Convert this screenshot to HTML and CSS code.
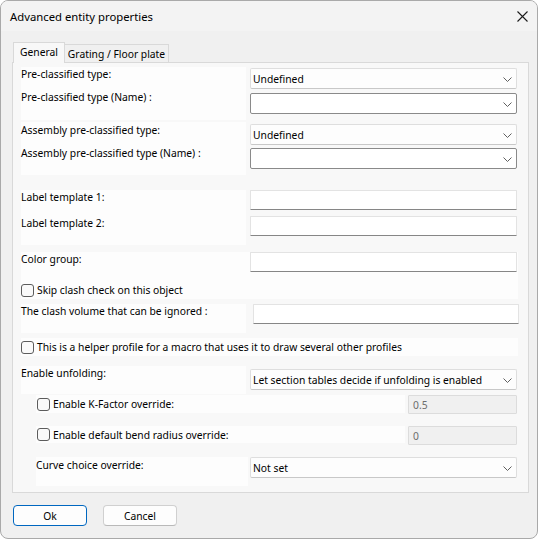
FILE: index.html
```html
<!DOCTYPE html>
<html lang="en">
<head>
<meta charset="utf-8">
<title>Advanced entity properties</title>
<link rel="stylesheet" href="styles.css">
</head>
<body>
<div class="window">
  <div class="titlebar">
    <span class="title">Advanced entity properties</span>
    <svg class="close" width="11" height="11" viewBox="0 0 11 11"><path d="M0.5 0.5 L10.5 10.5 M10.5 0.5 L0.5 10.5" stroke="#1b1b1b" stroke-width="1.1" fill="none"/></svg>
  </div>
  <div class="client">
    <div class="tabs">
      <div class="tab active">General</div>
      <div class="tab">Grating / Floor plate</div>
    </div>
    <div class="panel">

      <div class="row grp-class">
        <div class="lblbox tall">
          <div class="lbl first">Pre-classified type:</div>
          <div class="lbl">Pre-classified type (Name) :</div>
        </div>
        <div class="fields combos">
          <div class="combo">Undefined<svg class="chev" width="9" height="5" viewBox="0 0 9 5"><polyline points="0.5,0.5 4.5,4.5 8.5,0.5" fill="none" stroke="#5f5f5f" stroke-width="1"/></svg></div>
          <div class="combo edit"><svg class="chev" width="9" height="5" viewBox="0 0 9 5"><polyline points="0.5,0.5 4.5,4.5 8.5,0.5" fill="none" stroke="#5f5f5f" stroke-width="1"/></svg></div>
        </div>
      </div>

      <div class="row grp-assembly">
        <div class="lblbox tall">
          <div class="lbl first">Assembly pre-classified type:</div>
          <div class="lbl">Assembly pre-classified type (Name) :</div>
        </div>
        <div class="fields combos">
          <div class="combo">Undefined<svg class="chev" width="9" height="5" viewBox="0 0 9 5"><polyline points="0.5,0.5 4.5,4.5 8.5,0.5" fill="none" stroke="#5f5f5f" stroke-width="1"/></svg></div>
          <div class="combo edit"><svg class="chev" width="9" height="5" viewBox="0 0 9 5"><polyline points="0.5,0.5 4.5,4.5 8.5,0.5" fill="none" stroke="#5f5f5f" stroke-width="1"/></svg></div>
        </div>
      </div>

      <div class="row grp-labels">
        <div class="lblbox labels">
          <div class="lbl wide">Label template 1:</div>
          <div class="lbl">Label template 2:</div>
        </div>
        <div class="fields texts">
          <div class="input"></div>
          <div class="input"></div>
        </div>
      </div>

      <div class="row grp-color box fullw">
        <div class="lblbox plain">
          <div class="lbl">Color group:</div>
        </div>
        <div class="fields">
          <div class="input"></div>
        </div>
      </div>

      <div class="row check box fullw">
        <span class="cb"></span><span>Skip clash check on this object</span>
      </div>

      <div class="row grp-clash">
        <div class="lblbox short">
          <div class="lbl">The clash volume that can be ignored :</div>
        </div>
        <div class="input clash"></div>
      </div>

      <div class="row check box fullw grp-helper">
        <span class="cb"></span><span>This is a helper profile for a macro that uses it to draw several other profiles</span>
      </div>

      <div class="row grp-unfold">
        <div class="lblbox unfold">
          <div class="lbl">Enable unfolding:</div>
        </div>
        <div class="fields pad3">
          <div class="combo">Let section tables decide if unfolding is enabled<svg class="chev" width="9" height="5" viewBox="0 0 9 5"><polyline points="0.5,0.5 4.5,4.5 8.5,0.5" fill="none" stroke="#5f5f5f" stroke-width="1"/></svg></div>
        </div>
      </div>

      <div class="row grp-kfactor">
        <div class="check box sub">
          <span class="cb"></span><span>Enable K-Factor override:</span>
        </div>
        <div class="input disabled">0.5</div>
      </div>

      <div class="row grp-bend">
        <div class="check box sub">
          <span class="cb"></span><span>Enable default bend radius override:</span>
        </div>
        <div class="input disabled">0</div>
      </div>

      <div class="row grp-curve">
        <div class="lblbox curve">
          <div class="lbl">Curve choice override:</div>
        </div>
        <div class="fields near">
          <div class="combo">Not set<svg class="chev" width="9" height="5" viewBox="0 0 9 5"><polyline points="0.5,0.5 4.5,4.5 8.5,0.5" fill="none" stroke="#5f5f5f" stroke-width="1"/></svg></div>
        </div>
      </div>

    </div>
    <div class="buttons">
      <div class="btn default">Ok</div>
      <div class="btn">Cancel</div>
    </div>
  </div>
</div>
</body>
</html>
```

FILE: styles.css
```css
* { box-sizing: border-box; }

html { background: #ffffff; }

body {
  margin: 0;
  font-family: "Noto Sans", "Segoe UI", sans-serif;
  font-size: 10.3px;
  color: #000;
}

.window {
  width: 538px;
  height: 539px;
  border: 1px solid #a9a9a9;
  border-radius: 8px;
  background: #f0f0f0;
  overflow: hidden;
  display: flex;
  flex-direction: column;
}

/* title bar */
.titlebar {
  height: 30px;
  flex: none;
  background: #f3f3f3;
  display: flex;
  align-items: center;
  padding: 0 9px 0 9px;
}
.title { flex: 1; font-size: 11.3px; }
.close { flex: none; }

.client {
  padding: 11px 0 0 11px;
}

/* tabs */
.tabs {
  height: 20px;
  display: flex;
  align-items: flex-end;
  padding-left: 1px;
}
.tab {
  height: 18px;
  border: 1px solid #d9d9d9;
  border-bottom: none;
  background: #f0f0f0;
  display: flex;
  align-items: center;
  justify-content: center;
  line-height: 13px;
  white-space: nowrap;
}
.tab.active {
  width: 52px;
  height: 21px;
  margin-bottom: -1px;
  background: #f8f8f8;
  position: relative;
  z-index: 1;
  padding-bottom: 2px;
}
.tab + .tab {
  width: 105px;
  margin-left: -1px;
  padding-top: 1px;
}

/* page panel */
.panel {
  width: 517px;
  height: 431px;
  border: 1px solid #d9d9d9;
  background: #f8f8f8;
  padding: 4px 0 0 8px;
}

.row { display: flex; align-items: flex-start; }
.box { background: #fdfdfd; }
.fullw { width: 497px; }

.lblbox {
  width: 225px;
  background: #fdfdfd;
  flex: none;
}
.lbl { line-height: 13px; white-space: nowrap; padding-top: 1px; }
.lblbox.tall { height: 53px; }
.lblbox.tall .lbl.first { height: 23px; }
.lblbox.labels { height: 55px; }
.lblbox.labels .lbl.wide { height: 26px; }
.lblbox.plain { height: 29px; background: transparent; }
.lblbox.short { height: 29px; }
.lblbox.unfold { height: 28px; }
.lblbox.curve { width: 212px; height: 29px; margin-left: 15px; padding-top: 1px; }

.fields {
  width: 267px;
  margin-left: 4px;
  display: flex;
  flex-direction: column;
  flex: none;
}
.fields.combos { padding-top: 1px; gap: 4px; }
.fields.texts { gap: 6px; }
.fields.pad3 { padding-top: 3px; }
.fields.near { margin-left: 2px; }

/* group spacing */
.grp-assembly { margin-top: 2px; }
.grp-assembly .lblbox .lbl:first-child { margin-top: 1px; height: 23px; }
.grp-assembly .combos { padding-top: 2px; gap: 3px; }
.grp-labels { margin-top: 15px; }
.grp-color { margin-top: 7px; height: 29px; }
.grp-clash { margin-top: 5px; }
.grp-helper { margin-top: 5px; }
.grp-unfold { margin-top: 10px; }
.grp-kfactor { margin-top: 1px; }
.grp-bend { margin-top: 12px; }
.grp-curve { margin-top: 12px; }

/* combo boxes */
.combo {
  height: 21px;
  border: 1px solid #dedede;
  border-bottom-color: #c8c8c8;
  border-radius: 2px;
  background: #fdfdfd;
  display: flex;
  align-items: center;
  padding: 0 0 0 2px;
  position: relative;
  white-space: nowrap;
}
.combo.edit {
  background: #ffffff;
  border-color: #8a8a8a;
}
.chev {
  position: absolute;
  right: 4px;
  top: 8px;
}

/* text inputs */
.input {
  height: 20px;
  border: 1px solid #e3e3e3;
  border-bottom-color: #868686;
  border-radius: 1px;
  background: #ffffff;
  display: flex;
  align-items: center;
  padding-left: 4px;
}
.input.clash { width: 266px; margin-left: 7px; flex: none; }
.input.disabled {
  width: 109px;
  height: 19px;
  margin-left: 3px;
  background: #f0f0f0;
  border-color: #dcdcdc;
  color: #6d6d6d;
  flex: none;
}

/* checkbox rows */
.check {
  height: 18px;
  display: flex;
  align-items: center;
  white-space: nowrap;
}
.check.sub {
  width: 369px;
  margin-left: 15px;
  padding-left: 1px;
  flex: none;
}
.grp-bend .check.sub { height: 17px; }
.cb {
  width: 13px;
  height: 13px;
  border: 1px solid #5c5c5c;
  border-radius: 3px;
  background: #fafafa;
  margin-right: 3px;
  flex: none;
}

/* dialog buttons */
.buttons {
  display: flex;
  gap: 16px;
  margin: 12px 0 0 1px;
}
.btn {
  width: 74px;
  height: 21px;
  border: 1px solid #d0d0d0;
  border-bottom-color: #b9b9b9;
  border-radius: 4px;
  background: #fdfdfd;
  display: flex;
  align-items: center;
  justify-content: center;
}
.btn.default {
  border: 1px solid #0067c0;
}
```
